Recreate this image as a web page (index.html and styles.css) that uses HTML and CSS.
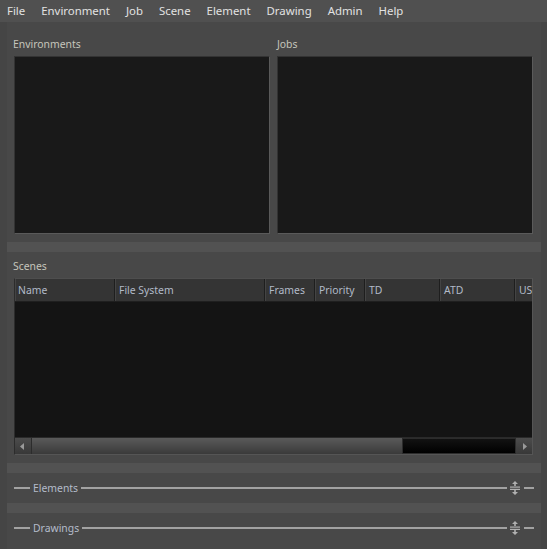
FILE: index.html
```html
<!DOCTYPE html>
<html>
<head>
<meta charset="utf-8">
<link rel="stylesheet" href="styles.css">
</head>
<body>
<div class="menubar">
  <span class="mi">File</span>
  <span class="mi">Environment</span>
  <span class="mi">Job</span>
  <span class="mi">Scene</span>
  <span class="mi">Element</span>
  <span class="mi">Drawing</span>
  <span class="mi">Admin</span>
  <span class="mi">Help</span>
</div>
<div class="main">
  <section class="top">
    <div class="col">
      <div class="label">Environments</div>
      <div class="box"></div>
    </div>
    <div class="col">
      <div class="label">Jobs</div>
      <div class="box"></div>
    </div>
  </section>
  <div class="splitter"></div>
  <section class="scenes">
    <div class="label">Scenes</div>
    <div class="table">
      <div class="thead">
        <div class="th w-name">Name</div>
        <div class="th w-fs">File System</div>
        <div class="th w-fr">Frames</div>
        <div class="th w-pr">Priority</div>
        <div class="th w-td">TD</div>
        <div class="th w-atd">ATD</div>
        <div class="th w-usr">USI</div>
      </div>
      <div class="tbody"></div>
      <div class="hscroll">
        <div class="sbtn"><svg width="16" height="15" viewBox="0 0 16 15"><path d="M5 7.5 L9 4 L9 11 Z" fill="#9a9a9a"/></svg></div>
        <div class="handle"></div>
        <div class="track"></div>
        <div class="sbtn"><svg width="16" height="15" viewBox="0 0 16 15"><path d="M7 4 L11 7.5 L7 11 Z" fill="#9a9a9a"/></svg></div>
      </div>
    </div>
  </section>
  <div class="splitter"></div>
  <section class="group">
    <span class="dash"></span>
    <span class="gtitle">Elements</span>
    <span class="line"></span>
    <svg class="gicon" width="12" height="16" viewBox="0 0 12 16"><path d="M6 1 L3 4 L9 4 Z M6 15 L3 12 L9 12 Z" fill="#b0b0b0"/><rect x="5.2" y="3" width="1.6" height="3" fill="#b0b0b0"/><rect x="5.2" y="10" width="1.6" height="3" fill="#b0b0b0"/><rect x="1" y="6.5" width="10" height="1.2" fill="#b0b0b0"/><rect x="1" y="8.8" width="10" height="1.2" fill="#b0b0b0"/></svg>
    <span class="dash end"></span>
  </section>
  <div class="splitter"></div>
  <section class="group">
    <span class="dash"></span>
    <span class="gtitle">Drawings</span>
    <span class="line"></span>
    <svg class="gicon" width="12" height="16" viewBox="0 0 12 16"><path d="M6 1 L3 4 L9 4 Z M6 15 L3 12 L9 12 Z" fill="#b0b0b0"/><rect x="5.2" y="3" width="1.6" height="3" fill="#b0b0b0"/><rect x="5.2" y="10" width="1.6" height="3" fill="#b0b0b0"/><rect x="1" y="6.5" width="10" height="1.2" fill="#b0b0b0"/><rect x="1" y="8.8" width="10" height="1.2" fill="#b0b0b0"/></svg>
    <span class="dash end"></span>
  </section>
</div>
</body>
</html>
```
FILE: styles.css
```css
html, body {
  margin: 0;
  padding: 0;
  background: #454545;
  height: 100%;
  overflow: hidden;
}
body {
  font-family: "Noto Sans", "Open Sans", sans-serif;
  font-size: 12px;
}
.menubar {
  height: 22px;
  background: #505050;
  display: flex;
  align-items: center;
  padding-left: 1px;
}
.mi {
  color: #e2e2e2;
  font-size: 11.4px;
  padding: 0 6px 0 6px;
  margin-right: 4px;
  line-height: 22px;
}
.main {
  margin-left: 7px;
  width: 534px;
  background: #484848;
  height: 527px;
  display: flex;
  flex-direction: column;
}
.label {
  color: #c6c6bc;
  font-size: 10.4px;
  line-height: 16px;
  height: 16px;
  margin-bottom: 4px;
  padding-left: 0;
}
.top {
  display: grid;
  grid-template-columns: 257px 257px;
  column-gap: 6px;
  padding: 14px 8px 8px 6px;
}
.top .col:last-child .label { padding-left: 1px; }
.top .col .box { margin-left: 1px; }
.box {
  height: 176px;
  background: #191919;
  border: 1px solid;
  border-color: #333 #5a5a5a #5a5a5a #333;
}
.splitter {
  height: 10px;
  background: #525252;
  flex: none;
}
.scenes {
  padding: 6px 8px 8px 6px;
}
.table {
  margin-left: 1px;
  height: 175px;
  border: 1px solid;
  border-color: #4e4e4e #555 #555 #2c2c2c;
  background: #141414;
  display: flex;
  flex-direction: column;
}
.thead {
  height: 22px;
  background: #343434;
  display: flex;
  overflow: hidden;
  border-bottom: 1px solid #1f1f1f;
  flex: none;
}
.th {
  color: #b2bac8;
  font-size: 10.4px;
  line-height: 23px;
  padding-left: 4px;
  box-sizing: border-box;
  border-right: 1px solid #1e1e1e;
  box-shadow: inset 1px 0 0 #444;
  flex: none;
  white-space: nowrap;
  overflow: hidden;
}
.w-name { width: 100px; padding-left: 3px; }
.w-fs { width: 150px; }
.w-fr { width: 50px; }
.w-pr { width: 50px; }
.w-td { width: 75px; }
.w-atd { width: 75px; }
.w-usr { width: 30px; }
.tbody {
  flex: 1;
}
.hscroll {
  height: 16px;
  display: flex;
  flex: none;
  border-top: 1px solid #2a2a2a;
}
.sbtn {
  width: 16px;
  height: 16px;
  background: linear-gradient(#4c4c4c, #383838);
  display: flex;
  align-items: center;
  justify-content: center;
  flex: none;
}
.handle {
  width: 371px;
  background: linear-gradient(#5a5a5a, #3a3a3a);
  border-left: 1px solid #2c2c2c;
  box-sizing: border-box;
  flex: none;
}
.track {
  flex: 1;
  background: linear-gradient(#121212, #000);
  border: 1px solid #2c2c2c;
  box-sizing: border-box;
}
.group {
  height: 30px;
  display: flex;
  align-items: center;
  padding: 0 7px 0 7px;
  flex: none;
}
.dash {
  width: 16px;
  height: 2px;
  background: #a2a2a2;
  flex: none;
}
.dash.end { width: 10px; margin-left: 3px; }
.gtitle {
  color: #b4bcca;
  font-size: 10.4px;
  padding: 0 3px 0 3px;
  line-height: 16px;
}
.line {
  flex: 1;
  height: 2px;
  background: #a2a2a2;
}
.gicon {
  flex: none;
  margin-left: 2px;
}
```
